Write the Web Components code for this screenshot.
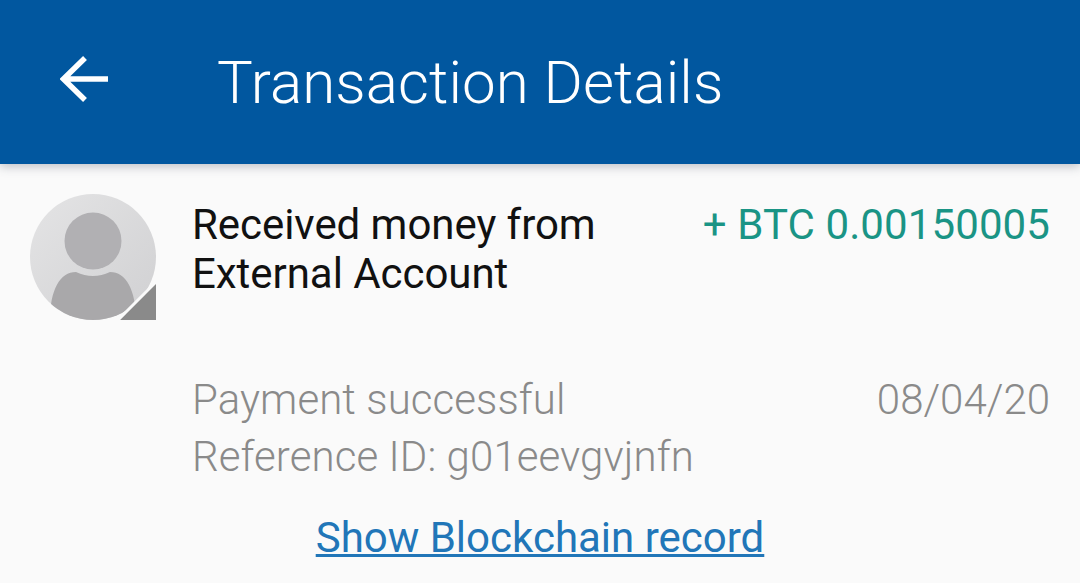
<!DOCTYPE html>
<html>
<head>
<meta charset="utf-8">
<style>
    html, body { margin: 0; height: 100%; background: #fafafa; overflow: hidden; }
</style>
</head>
<body>
<tx-page>
    <app-bar title="Transaction Details"></app-bar>
    <tx-row></tx-row>
</tx-page>

<script>
class TxPage extends HTMLElement {
    constructor() {
        super();
        this.attachShadow({ mode: 'open' }).innerHTML = `
            <style>
                :host { display: flex; flex-direction: column; height: 583px; background: #fafafa; font-family: Roboto, sans-serif; }
            </style>
            <slot></slot>
        `;
    }
}

class AppBar extends HTMLElement {
    constructor() {
        super();
        this.attachShadow({ mode: 'open' }).innerHTML = `
            <style>
                :host { display: flex; align-items: center; height: 164px; flex: none; padding-left: 60px; background: #01579f; color: #fff; box-shadow: 0 2px 10px rgba(60,70,90,.35); position: relative; z-index: 1; }
                svg { width: 48px; height: 48px; flex: none; margin-top: -7px; }
                h1 { margin: 2px 0 0 109px; font: 300 60px/1 Roboto, sans-serif; letter-spacing: .1px; }
            </style>
            <svg viewBox="0 0 48 48" fill="none" stroke="#fff" stroke-width="5.5"><path d="M3 24H48M25 3L3.5 24L25 45"/></svg>
            <h1></h1>
        `;
        this.shadowRoot.querySelector('h1').textContent = this.getAttribute('title');
    }
}

class UserAvatar extends HTMLElement {
    constructor() {
        super();
        this.attachShadow({ mode: 'open' }).innerHTML = `
            <style>
                :host { display: block; width: 126px; height: 126px; flex: none; }
                svg { display: block; }
            </style>
            <svg width="126" height="126" viewBox="0 0 126 126">
                <defs>
                    <linearGradient id="g" x1="0" y1="0" x2="1" y2="1">
                        <stop offset="0" stop-color="#e4e4e5"/>
                        <stop offset="1" stop-color="#d0d0d2"/>
                    </linearGradient>
                    <clipPath id="c"><circle cx="63" cy="63" r="63"/></clipPath>
                </defs>
                <circle cx="63" cy="63" r="63" fill="url(#g)"/>
                <circle cx="63" cy="47" r="28.5" fill="#b1b0b3"/>
                <path clip-path="url(#c)" d="M20 126C20 96 30 78 46 78Q63 86 80 78C96 78 106 96 106 126Z" fill="#a9a8aa"/>
                <path d="M88 126L126 88V126Z" fill="#8a8a8a"/>
                <path d="M86 128L128 86" stroke="#fafafa" stroke-width="3"/>
            </svg>
        `;
    }
}

class TxRow extends HTMLElement {
    constructor() {
        super();
        this.attachShadow({ mode: 'open' }).innerHTML = `
            <style>
                :host { display: grid; grid-template-columns: 126px 1fr auto; column-gap: 37px; padding: 30px 30px 0; white-space: nowrap; }
                .who { font-size: 42px; line-height: 49px; color: #111; margin: 6px 0 0 -1px; letter-spacing: -.05px; }
                .amount { font-size: 42px; line-height: 49px; color: #1a9485; margin-top: 6px; letter-spacing: .1px; }
                .meta { grid-column: 2; min-width: 0; margin: 51px 0 0 -1px; font-size: 42px; font-weight: 300; line-height: 57px; color: #8a8a8a; letter-spacing: .08px; }
                .date { margin-top: 51px; font-size: 42px; font-weight: 300; line-height: 57px; color: #8a8a8a; text-align: right; }
                .link { grid-column: 1 / -1; margin-top: 28px; text-align: center; font-size: 42px; line-height: 49px; }
                a { color: #2176b8; text-decoration: underline; text-decoration-thickness: 3px; }
            </style>
            <user-avatar></user-avatar>
            <div class="who">Received money from<br>External Account</div>
            <div class="amount">+ BTC 0.00150005</div>
            <div class="meta">Payment successful<br>Reference ID: g01eevgvjnfn</div>
            <div class="date">08/04/20</div>
            <div class="link"><a href="#">Show Blockchain record</a></div>
        `;
    }
}

customElements.define('user-avatar', UserAvatar);
customElements.define('app-bar', AppBar);
customElements.define('tx-row', TxRow);
customElements.define('tx-page', TxPage);
</script>
</body>
</html>
